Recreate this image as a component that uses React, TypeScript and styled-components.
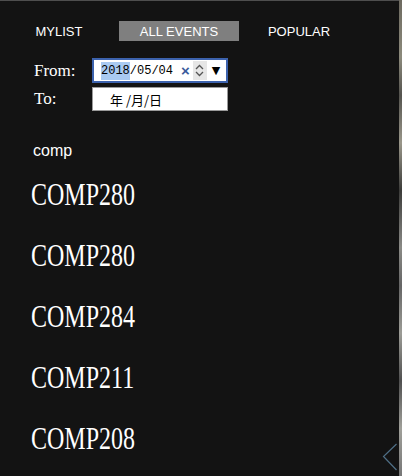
import React from "react";
import styled, { createGlobalStyle } from "styled-components";

const Global = createGlobalStyle`
  html, body { margin: 0; padding: 0; }
  body {
    width: 402px;
    height: 476px;
    overflow: hidden;
    background: linear-gradient(180deg, #6d6a60 0%, #8c8a7c 12%, #55544f 20%, #9a978a 30%, #3c3c3a 40%, #8a8a86 52%, #666 60%, #9c9c96 70%, #505050 80%, #a0a09a 90%, #777 100%);
    font-family: "Liberation Sans", Arial, sans-serif;
  }
`;

const Panel = styled.div`
  position: relative;
  width: 399px;
  height: 476px;
  box-sizing: border-box;
  background: #131313;
  border-top: 1px solid #4e4e4e;
  padding-top: 20px;
`;

const Tabs = styled.nav`
  display: flex;
  margin-left: -1px;
  height: 20px;
`;

const Tab = styled.div<{ $active?: boolean }>`
  width: 120px;
  height: 20px;
  display: flex;
  align-items: center;
  justify-content: center;
  font-size: 13px;
  color: #fff;
  background: ${(p) => (p.$active ? "#7f7f7f" : "transparent")};
`;

const Form = styled.div`
  display: grid;
  grid-template-columns: 58px 136px;
  row-gap: 4px;
  margin: 17px 0 0 34px;
  align-items: center;
`;

const Label = styled.span`
  font-family: "Liberation Serif", "Times New Roman", serif;
  font-size: 17px;
  color: #fff;
`;

const DateBox = styled.div<{ $focused?: boolean }>`
  box-sizing: border-box;
  height: ${(p) => (p.$focused ? "25px" : "24px")};
  background: #fff;
  border: ${(p) => (p.$focused ? "2px solid #3c62ad" : "1px solid #9a9a9a")};
  display: flex;
  align-items: center;
  padding-left: ${(p) => (p.$focused ? "7px" : "17px")};
  font-family: "Liberation Mono", "Noto Sans CJK SC", monospace;
  font-size: 12px;
  color: #000;
`;

const Sel = styled.span`
  background: #a9caf1;
  line-height: 18px;
`;

const Clear = styled.span`
  margin-left: 8px;
  color: #3a5c9c;
  font-family: "Liberation Sans", sans-serif;
  font-weight: bold;
  font-size: 15px;
  line-height: 1;
`;

const Spin = styled.span`
  margin-left: 3px;
  width: 14px;
  height: 19px;
  background: #e6e6e6;
  display: flex;
  align-items: center;
  justify-content: center;
`;

const Drop = styled.span`
  margin-left: 5px;
  font-family: "DejaVu Sans", sans-serif;
  font-size: 11px;
  color: #000;
`;

const CjkText = styled.span`
  font-family: "Noto Sans CJK SC", sans-serif;
  font-size: 13px;
  letter-spacing: 0px;
`;

const Query = styled.div`
  margin: 31px 0 0 33px;
  font-size: 16px;
  line-height: 18px;
  color: #fff;
`;

const List = styled.ul`
  list-style: none;
  margin: 14px 0 0 31px;
  padding: 0;
  display: flex;
  flex-direction: column;
  gap: 21px;
`;

const Item = styled.li`
  height: 40px;
  font-family: "Liberation Serif", "Times New Roman", serif;
  font-size: 32px;
  line-height: 40px;
  color: #fff;
  transform: scaleX(0.75);
  transform-origin: left center;
  white-space: nowrap;
`;

const Chevron = styled.svg`
  position: absolute;
  left: 381px;
  top: 441px;
`;

export default function App() {
  const items = ["COMP280", "COMP280", "COMP284", "COMP211", "COMP208"];
  return (
    <>
      <Global />
      <Panel>
        <Tabs>
          <Tab>MYLIST</Tab>
          <Tab $active>ALL EVENTS</Tab>
          <Tab>POPULAR</Tab>
        </Tabs>
        <Form>
          <Label>From:</Label>
          <DateBox $focused>
            <Sel>2018</Sel>/05/04
            <Clear>×</Clear>
            <Spin>
              <svg width="9" height="15" viewBox="0 0 9 15">
                <path d="M1 6 L4.5 2.5 L8 6" fill="none" stroke="#555" strokeWidth="1.3" />
                <path d="M1 9 L4.5 12.5 L8 9" fill="none" stroke="#555" strokeWidth="1.3" />
              </svg>
            </Spin>
            <Drop>▼</Drop>
          </DateBox>
          <Label>To:</Label>
          <DateBox>
            <CjkText>年 /月/日</CjkText>
          </DateBox>
        </Form>
        <Query>comp</Query>
        <List>
          {items.map((t, i) => (
            <Item key={i}>{t}</Item>
          ))}
        </List>
        <Chevron width="18" height="30" viewBox="0 0 18 30">
          <path d="M15.5 2 L2.5 14.5 L15.5 28" fill="none" stroke="#4f6f86" strokeWidth="1.2" />
        </Chevron>
      </Panel>
    </>
  );
}
